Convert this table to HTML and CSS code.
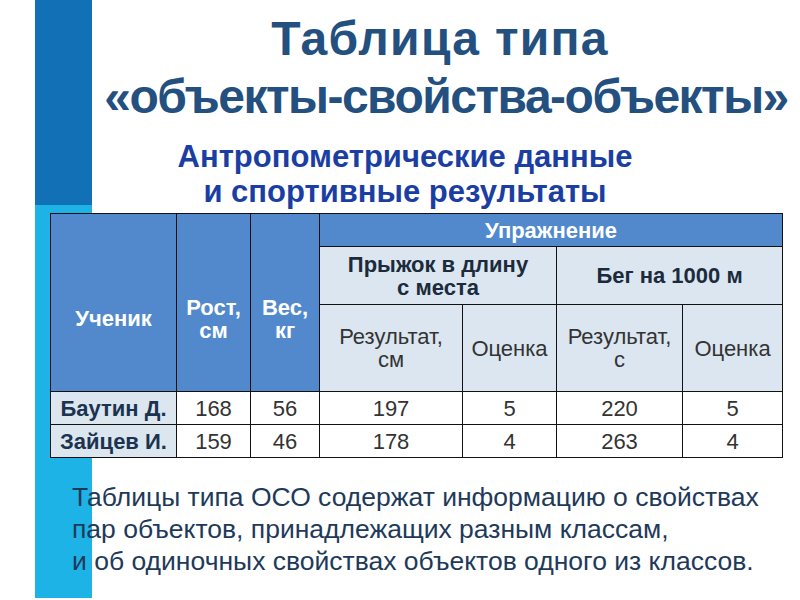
FILE: index.html
```html
<!DOCTYPE html>
<html lang="ru">
<head>
<meta charset="utf-8">
<link rel="stylesheet" href="styles.css">
</head>
<body>
<div class="slide">
  <header class="title">
    <h1 class="title-main"><span class="t1">Таблица типа</span><span class="t2">«объекты-свойства-объекты»</span></h1>
    <h2 class="title-sub">Антропометрические данные<br>и спортивные результаты</h2>
  </header>
  <table class="oso">
    <colgroup>
      <col class="c1"><col class="c2"><col class="c3"><col class="c4"><col class="c5"><col class="c6"><col class="c7">
    </colgroup>
    <tr class="r1">
      <th class="hd side" rowspan="3">Ученик</th>
      <th class="hd side" rowspan="3">Рост,<br>см</th>
      <th class="hd side" rowspan="3">Вес,<br>кг</th>
      <th class="hd" colspan="4">Упражнение</th>
    </tr>
    <tr class="r2">
      <th class="lt bold" colspan="2">Прыжок в длину<br>с места</th>
      <th class="lt bold" colspan="2">Бег на 1000 м</th>
    </tr>
    <tr class="r3">
      <th class="lt">Результат,<br>см</th>
      <th class="lt">Оценка</th>
      <th class="lt">Результат,<br>с</th>
      <th class="lt">Оценка</th>
    </tr>
    <tr class="rd">
      <th class="name">Баутин Д.</th>
      <td>168</td><td>56</td><td>197</td><td>5</td><td>220</td><td>5</td>
    </tr>
    <tr class="rd">
      <th class="name">Зайцев И.</th>
      <td>159</td><td>46</td><td>178</td><td>4</td><td>263</td><td>4</td>
    </tr>
  </table>
  <p class="note">Таблицы типа ОСО содержат информацию о свойствах<br>пар объектов, принадлежащих разным классам,<br>и об одиночных свойствах объектов одного из классов.</p>
</div>
</body>
</html>
```

FILE: styles.css
```css
html, body {
  margin: 0;
  padding: 0;
  background: #ffffff;
}
.slide {
  width: 800px;
  height: 600px;
  overflow: hidden;
  background:
    linear-gradient(#1270b6, #1270b6) 35px 0 / 57px 205px no-repeat,
    linear-gradient(#1db3e7, #1db3e7) 35px 205px / 57px 393px no-repeat,
    #ffffff;
  display: flex;
  flex-direction: column;
  font-family: "Liberation Sans", Arial, sans-serif;
}
.title {
  display: flex;
  flex-direction: column;
  align-items: center;
}
.title-main {
  margin: 10px 0 0 92px;
  width: 708px;
  display: flex;
  flex-direction: column;
  align-items: center;
  font-family: "Liberation Sans", Arial, sans-serif;
  font-weight: bold;
  font-size: 48px;
  line-height: 58px;
  color: #23507f;
  white-space: nowrap;
}
.t1 {
  letter-spacing: 1.3px;
  margin-right: 12px;
}
.t2 {
  letter-spacing: -1.5px;
}
.title-sub {
  margin: 13px 0 0 0;
  padding-left: 10px;
  text-align: center;
  font-family: "Liberation Sans", Arial, sans-serif;
  font-weight: bold;
  font-size: 31px;
  line-height: 35px;
  color: #1b3ea3;
}
.oso {
  margin: 4px 0 0 50px;
  width: 733px;
  table-layout: fixed;
  border-collapse: collapse;
  font-size: 22px;
}
.c1 { width: 126px; }
.c2 { width: 74px; }
.c3 { width: 69px; }
.c4 { width: 143px; }
.c5 { width: 94px; }
.c6 { width: 126px; }
.c7 { width: 100px; }
.oso th, .oso td {
  border: 1px solid #111;
  padding: 0;
  text-align: center;
  vertical-align: middle;
  line-height: 23px;
}
.r1 { height: 33px; }
.r2 { height: 58px; }
.r3 { height: 87px; }
.rd { height: 33px; }
.hd {
  background: #5289cc;
  color: #ffffff;
  font-weight: bold;
}
.hd.side {
  padding-top: 32px;
}
.lt {
  background: #dbe6f0;
  color: #333333;
  font-weight: normal;
}
.lt.bold {
  font-weight: bold;
  color: #1c2b3c;
}
.name {
  background: #dbe6ef;
  color: #1b334f;
  font-weight: bold;
}
.oso td {
  background: #ffffff;
  color: #333333;
}
.note {
  margin: 23px 0 0 72px;
  font-size: 26.5px;
  line-height: 32px;
  color: #1e3a5a;
  white-space: nowrap;
}
```
